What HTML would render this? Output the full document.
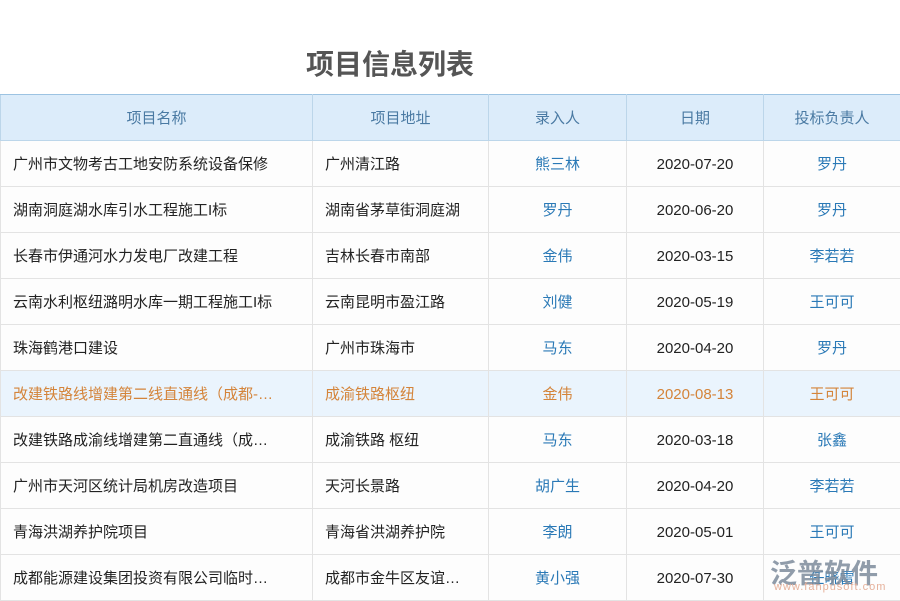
<!DOCTYPE html>
<html><head><meta charset="utf-8"><style>
*{margin:0;padding:0;box-sizing:border-box}
body{width:900px;height:600px;overflow:hidden;background:#fff;font-family:"Liberation Sans","Noto Sans CJK SC",sans-serif;position:relative}
h1{position:absolute;left:306px;top:43px;font-size:28px;font-weight:bold;color:#555}
table{position:absolute;left:0;top:94px;width:900px;border-collapse:collapse;table-layout:fixed}
th{height:46px;background:#dcecfa;color:#4a7aa3;font-weight:normal;font-size:15px;border:1px solid #bcd6ea;border-top:1px solid #9cc3e2}
td{height:46px;font-size:15px;color:#222;border:1px solid #e3e3e3;white-space:nowrap;overflow:hidden;background:#fdfdfd}
td:nth-child(1),td:nth-child(2){padding-left:12px}
td:nth-child(3),td:nth-child(4),td:nth-child(5){text-align:center}
td:nth-child(4){padding-top:2px}
td:nth-child(3),td:nth-child(5){color:#2a79b6}
tr.hl td{background:#eaf4fd;color:#d4843a}
.wm{position:absolute;left:770px;top:552px;color:#7d8c9c;font-size:27px;font-weight:bold;opacity:.85}
.wm small{position:absolute;left:4px;top:29px;font-size:11px;color:#e2a48a;font-weight:normal;letter-spacing:1px}
</style></head><body>
<h1>项目信息列表</h1>
<table>
<colgroup><col style="width:312px"><col style="width:176px"><col style="width:138px"><col style="width:137px"><col style="width:137px"></colgroup>
<tr><th>项目名称</th><th>项目地址</th><th>录入人</th><th>日期</th><th>投标负责人</th></tr>
<tr><td>广州市文物考古工地安防系统设备保修</td><td>广州清江路</td><td>熊三林</td><td>2020-07-20</td><td>罗丹</td></tr>
<tr><td>湖南洞庭湖水库引水工程施工I标</td><td>湖南省茅草街洞庭湖</td><td>罗丹</td><td>2020-06-20</td><td>罗丹</td></tr>
<tr><td>长春市伊通河水力发电厂改建工程</td><td>吉林长春市南部</td><td>金伟</td><td>2020-03-15</td><td>李若若</td></tr>
<tr><td>云南水利枢纽潞明水库一期工程施工I标</td><td>云南昆明市盈江路</td><td>刘健</td><td>2020-05-19</td><td>王可可</td></tr>
<tr><td>珠海鹤港口建设</td><td>广州市珠海市</td><td>马东</td><td>2020-04-20</td><td>罗丹</td></tr>
<tr class="hl"><td>改建铁路线增建第二线直通线（成都-…</td><td>成渝铁路枢纽</td><td>金伟</td><td>2020-08-13</td><td>王可可</td></tr>
<tr><td>改建铁路成渝线增建第二直通线（成…</td><td>成渝铁路 枢纽</td><td>马东</td><td>2020-03-18</td><td>张鑫</td></tr>
<tr><td>广州市天河区统计局机房改造项目</td><td>天河长景路</td><td>胡广生</td><td>2020-04-20</td><td>李若若</td></tr>
<tr><td>青海洪湖养护院项目</td><td>青海省洪湖养护院</td><td>李朗</td><td>2020-05-01</td><td>王可可</td></tr>
<tr><td>成都能源建设集团投资有限公司临时…</td><td>成都市金牛区友谊…</td><td>黄小强</td><td>2020-07-30</td><td>任晓雷</td></tr>
</table>
<div class="wm">泛普软件<small>www.fanpusoft.com</small></div>
</body></html>
